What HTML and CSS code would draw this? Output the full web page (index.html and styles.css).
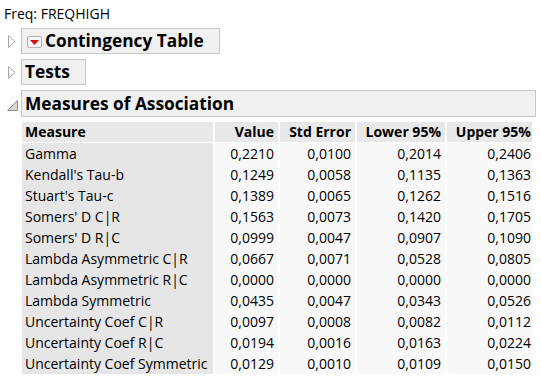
FILE: index.html
```html
<!DOCTYPE html>
<html>
<head>
<meta charset="utf-8">
<link rel="stylesheet" href="styles.css">
</head>
<body>
<div class="report">
  <div class="freq">Freq: FREQHIGH</div>

  <div class="node">
    <svg class="tri" width="8" height="13" viewBox="0 0 8 13"><path d="M0.5 0.5 L7 6.5 L0.5 12.5 Z" fill="#fff" stroke="#a8a8a8" stroke-width="1"/></svg>
    <div class="outline">
      <span class="menu-btn"><svg width="9" height="5" viewBox="0 0 9 5"><path d="M0 0 H9 L4.5 5 Z" fill="#d01010"/></svg></span>
      <span class="title">Contingency Table</span>
    </div>
  </div>

  <div class="node">
    <svg class="tri" width="8" height="13" viewBox="0 0 8 13"><path d="M0.5 0.5 L7 6.5 L0.5 12.5 Z" fill="#fff" stroke="#a8a8a8" stroke-width="1"/></svg>
    <div class="outline">
      <span class="title">Tests</span>
    </div>
  </div>

  <div class="node open">
    <svg class="tri-open" width="11" height="11" viewBox="0 0 11 11"><path d="M10.5 0.5 L10.5 10.5 L0.5 10.5 Z" fill="#d8d8d8" stroke="#8c8c8c" stroke-width="1"/></svg>
    <div class="outline wide">
      <span class="title">Measures of Association</span>
    </div>
  </div>

  <table class="grid">
    <thead>
      <tr><th class="c-m">Measure</th><th class="c-v">Value</th><th class="c-s">Std Error</th><th class="c-l">Lower 95%</th><th class="c-u">Upper 95%</th></tr>
    </thead>
    <tbody>
      <tr><td class="name">Gamma</td><td>0,2210</td><td>0,0100</td><td>0,2014</td><td>0,2406</td></tr>
      <tr><td class="name">Kendall's Tau-b</td><td>0,1249</td><td>0,0058</td><td>0,1135</td><td>0,1363</td></tr>
      <tr><td class="name">Stuart's Tau-c</td><td>0,1389</td><td>0,0065</td><td>0,1262</td><td>0,1516</td></tr>
      <tr><td class="name">Somers' D C|R</td><td>0,1563</td><td>0,0073</td><td>0,1420</td><td>0,1705</td></tr>
      <tr><td class="name">Somers' D R|C</td><td>0,0999</td><td>0,0047</td><td>0,0907</td><td>0,1090</td></tr>
      <tr><td class="name">Lambda Asymmetric C|R</td><td>0,0667</td><td>0,0071</td><td>0,0528</td><td>0,0805</td></tr>
      <tr><td class="name">Lambda Asymmetric R|C</td><td>0,0000</td><td>0,0000</td><td>0,0000</td><td>0,0000</td></tr>
      <tr><td class="name">Lambda Symmetric</td><td>0,0435</td><td>0,0047</td><td>0,0343</td><td>0,0526</td></tr>
      <tr><td class="name">Uncertainty Coef C|R</td><td>0,0097</td><td>0,0008</td><td>0,0082</td><td>0,0112</td></tr>
      <tr><td class="name">Uncertainty Coef R|C</td><td>0,0194</td><td>0,0016</td><td>0,0163</td><td>0,0224</td></tr>
      <tr><td class="name">Uncertainty Coef Symmetric</td><td>0,0129</td><td>0,0010</td><td>0,0109</td><td>0,0150</td></tr>
    </tbody>
  </table>
</div>
</body>
</html>
```

FILE: styles.css
```css
html, body {
  margin: 0;
  padding: 0;
  background: #ffffff;
}

.report {
  font-family: "Open Sans", "Noto Sans", sans-serif;
  color: #000;
  padding: 4px 0 0 0;
}

.freq {
  font-size: 14px;
  line-height: 19px;
  padding-left: 4px;
  height: 24px;
}

.node {
  display: flex;
  align-items: center;
  margin-bottom: 5px;
}

.tri {
  margin-left: 8px;
  margin-right: 5px;
  flex: none;
}

.tri-open {
  margin-left: 7px;
  margin-right: 3px;
  margin-top: 4px;
  flex: none;
}

.outline {
  display: flex;
  align-items: center;
  height: 24px;
  background: #f0f0f0;
  border: 1px solid #c8c8c8;
  padding: 0 15px 0 3px;
}

.outline.wide {
  width: 495px;
  height: 25px;
}

.title {
  font-weight: 700;
  font-size: 17.3px;
  line-height: 22px;
}

.menu-btn {
  display: flex;
  align-items: center;
  justify-content: center;
  width: 13px;
  height: 10px;
  border: 1px solid #b4b4b4;
  border-radius: 2px;
  background: #f6f6f6;
  margin: 2px 3px 0 2px;
}

.grid {
  margin-left: 22px;
  margin-top: 4px;
  border-collapse: separate;
  border-spacing: 0;
  font-size: 14px;
  table-layout: fixed;
  width: 510px;
}

.grid th, .grid td {
  padding: 0 4px 0 3px;
  height: 21px;
  line-height: 21px;
  white-space: nowrap;
  overflow: hidden;
  border-right: 2px solid #fff;
  text-align: right;
}

.grid th {
  background: #e8e8e8;
  font-weight: 700;
  height: 20px;
  line-height: 20px;
  border-bottom: 1px solid #fff;
}

.grid th:last-child, .grid td:last-child {
  border-right: none;
  padding-right: 1px;
}

.grid td {
  background: #f8f8f8;
}

.grid .c-m { width: 184px; text-align: left; }
.grid .c-v { width: 56px; }
.grid .c-s { width: 68px; }
.grid .c-l { width: 81px; }
.grid .c-u { width: 81px; }

.grid td.name {
  background: #e6e6e6;
  text-align: left;
}
```
